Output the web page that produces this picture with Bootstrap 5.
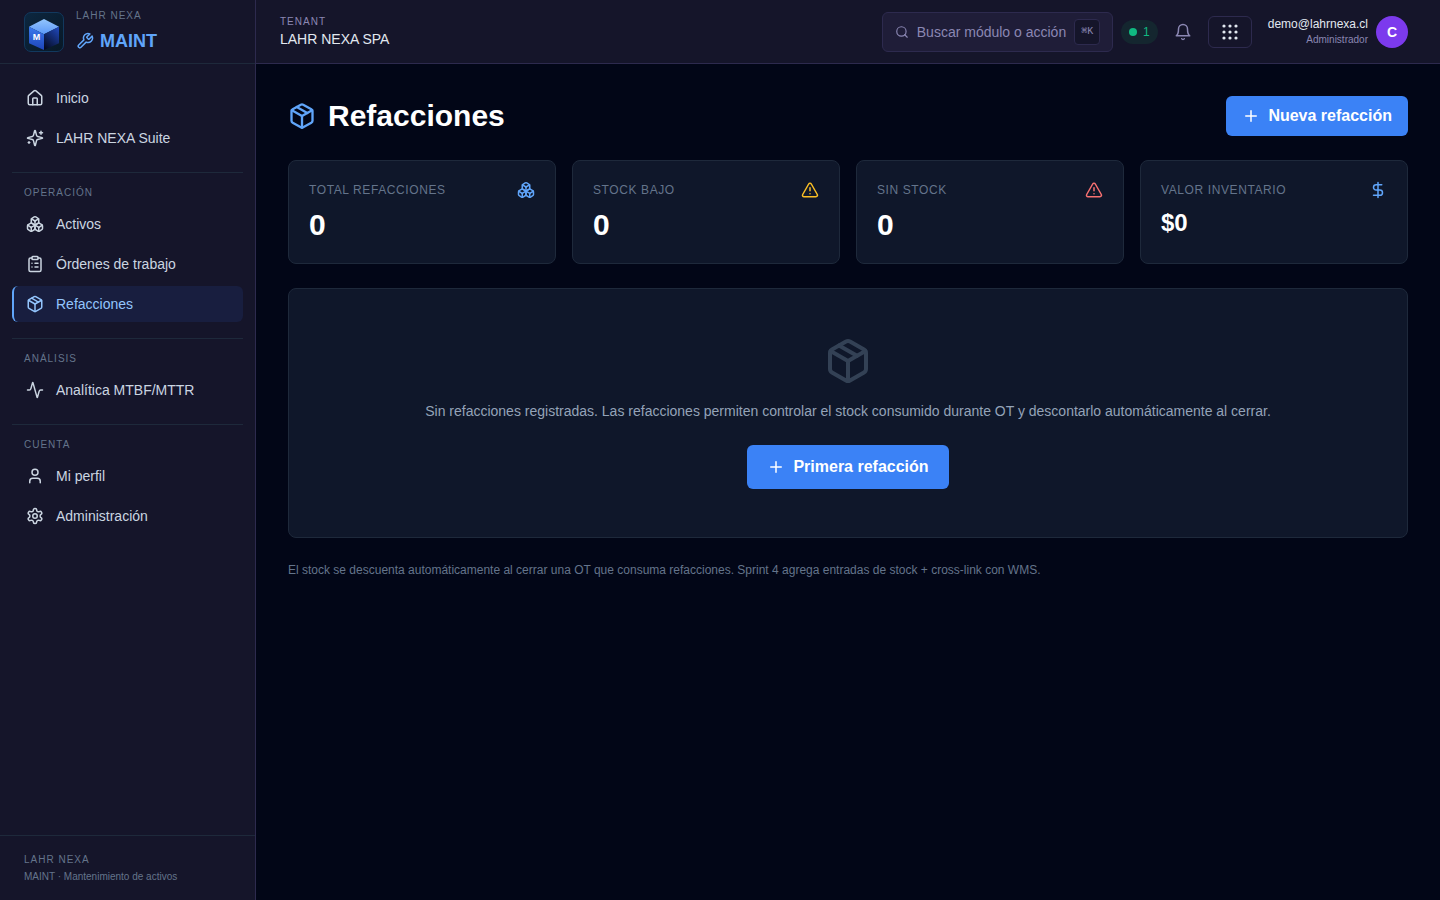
<!DOCTYPE html>
<html lang="es" data-bs-theme="dark">
<head>
<meta charset="utf-8">
<meta name="viewport" content="width=device-width, initial-scale=1">
<title>Refacciones · LAHR NEXA MAINT</title>
<link href="https://cdn.jsdelivr.net/npm/bootstrap@5.3.0/dist/css/bootstrap.min.css" rel="stylesheet">
<style>
  body { font-family: "Liberation Sans", Arial, sans-serif; font-size: 14px; line-height: 20px; background: #020617; color: #fff; }
  .ico { width: 18px; height: 18px; fill: none; stroke: currentColor; stroke-width: 2; stroke-linecap: round; stroke-linejoin: round; flex: none; display: block; }
  .sidebar { width: 256px; background: #15152a; border-right: 1px solid #2d2a4e; }
  .side-head { height: 64px; border-bottom: 1px solid #1e293b; padding: 0 24px; gap: 12px; }
  .eyebrow { font-size: 10px; line-height: 15px; letter-spacing: 1px; color: #64748b; text-transform: uppercase; }
  .product { font-size: 18px; line-height: 28px; font-weight: 700; color: #60a5fa; gap: 6px; margin-top: 4px; }
  .side-nav { padding: 16px 12px; gap: 4px; }
  .side-link { height: 36px; padding: 0 12px; gap: 12px; color: #cbd5e1; text-decoration: none; border-radius: 6px; border-left: 2px solid transparent; }
  .side-link.active { background: #181e3f; color: #93c5fd; border-left-color: #60a5fa; }
  .side-group { margin-top: 12px; border-top: 1px solid #1e293b; padding: 12px 12px 2px; }
  .side-foot { border-top: 1px solid #1e293b; padding: 16px 24px; }
  .foot-note { font-size: 10px; line-height: 15px; margin-top: 2px; color: #64748b; }
  .topbar { height: 64px; background: #15152a; border-bottom: 1px solid #2d2a4e; padding: 0 32px 0 24px; }
  .tenant { color: #e2e8f0; }
  .muted { color: #8b87b3; }
  .search { height: 40px; width: 231px; padding: 0 12px; border: 1px solid #2d2a4e; border-radius: 6px; background: #1f1d38; gap: 8px; }
  .search .ico { width: 14px; height: 14px; }
  .keycap { width: 26px; height: 26px; border: 1px solid #2d2a4e; border-radius: 4px; background: #15152a; font: 10px/15px "Liberation Mono", monospace; }
  .online { width: 37px; height: 24px; border-radius: 12px; background: #14262f; color: #10b981; font-size: 12px; gap: 6px; }
  .online i { width: 8px; height: 8px; border-radius: 50%; background: #10b981; }
  .apps { width: 44px; height: 32px; border: 1px solid #2d2a4e; border-radius: 6px; background: none; color: #e2e8f0; }
  .user-mail { font-size: 12px; line-height: 16px; }
  .user-role { font-size: 10px; line-height: 15px; }
  .avatar { width: 32px; height: 32px; border-radius: 50%; background: #7c3aed; font-weight: 700; }
  .page { padding: 32px; }
  .page h1 { font-size: 30px; line-height: 36px; font-weight: 700; gap: 12px; }
  .page h1 .ico { width: 28px; height: 28px; }
  .tone-blue { color: #60a5fa; }
  .tone-amber { color: #fbbf24; }
  .tone-red { color: #f87171; }
  .btn-blue { --bs-btn-bg: #3b82f6; --bs-btn-color: #fff; --bs-btn-hover-bg: #2563eb; --bs-btn-hover-color: #fff; --bs-btn-border-width: 0; --bs-btn-border-radius: 6px; --bs-btn-font-weight: 700; --bs-btn-font-size: 16px; --bs-btn-line-height: 24px; --bs-btn-padding-y: 8px; --bs-btn-padding-x: 16px; }
  .btn-blue.roomy { --bs-btn-padding-y: 10px; --bs-btn-padding-x: 20px; }
  .stats { display: grid; grid-template-columns: repeat(4, 1fr); gap: 16px; margin: 24px 0; }
  .panel { background: #0f172a; border: 1px solid #1e293b; border-radius: 8px; }
  .stat { height: 104px; padding: 20px; }
  .stat-label { font-size: 12px; line-height: 16px; letter-spacing: .6px; color: #64748b; }
  .stat-value { font-size: 30px; line-height: 36px; font-weight: 700; margin-top: 8px; }
  .stat-value.compact { font-size: 24px; line-height: 32px; }
  .empty { padding: 48px; color: #94a3b8; }
  .empty .box { width: 48px; height: 48px; color: #334155; }
  .note { font-size: 12px; line-height: 16px; color: #64748b; margin: 24px 0 0; }
</style>
</head>
<body>
<svg class="d-none" aria-hidden="true">
  <symbol id="home" viewBox="0 0 24 24"><path d="M15 21v-8a1 1 0 0 0-1-1h-4a1 1 0 0 0-1 1v8"/><path d="M3 10a2 2 0 0 1 .709-1.528l7-5.999a2 2 0 0 1 2.582 0l7 5.999A2 2 0 0 1 21 10v9a2 2 0 0 1-2 2H5a2 2 0 0 1-2-2z"/></symbol>
  <symbol id="sparkles" viewBox="0 0 24 24"><path d="M9.937 15.5A2 2 0 0 0 8.5 14.063l-6.135-1.582a.5.5 0 0 1 0-.962L8.5 9.936A2 2 0 0 0 9.937 8.5l1.582-6.135a.5.5 0 0 1 .963 0L14.063 8.5A2 2 0 0 0 15.5 9.937l6.135 1.581a.5.5 0 0 1 0 .964L15.5 14.063a2 2 0 0 0-1.437 1.437l-1.582 6.135a.5.5 0 0 1-.963 0z"/><path d="M20 3v4M22 5h-4M4 17v2M5 18H3"/></symbol>
  <symbol id="boxes" viewBox="0 0 24 24"><path d="M2.97 12.92A2 2 0 0 0 2 14.63v3.24a2 2 0 0 0 .97 1.71l3 1.8a2 2 0 0 0 2.06 0L12 19v-5.5l-5-3-4.03 2.42Z"/><path d="m7 16.5-4.74-2.85"/><path d="m7 16.5 5-3"/><path d="M7 16.5v5.17"/><path d="M12 13.5V19l3.97 2.38a2 2 0 0 0 2.06 0l3-1.8a2 2 0 0 0 .97-1.71v-3.24a2 2 0 0 0-.97-1.71L17 10.5l-5 3Z"/><path d="m17 16.5-5-3"/><path d="m17 16.5 4.74-2.85"/><path d="M17 16.5v5.17"/><path d="M7.97 4.42A2 2 0 0 0 7 6.13v4.37l5 3 5-3V6.13a2 2 0 0 0-.97-1.71l-3-1.8a2 2 0 0 0-2.06 0l-3 1.8Z"/><path d="M12 8 7.26 5.15"/><path d="m12 8 4.74-2.85"/><path d="M12 13.5V8"/></symbol>
  <symbol id="clipboard" viewBox="0 0 24 24"><rect width="8" height="4" x="8" y="2" rx="1"/><path d="M16 4h2a2 2 0 0 1 2 2v14a2 2 0 0 1-2 2H6a2 2 0 0 1-2-2V6a2 2 0 0 1 2-2h2M12 11h4M12 16h4M8 11h.01M8 16h.01"/></symbol>
  <symbol id="package" viewBox="0 0 24 24"><path d="M11 21.73a2 2 0 0 0 2 0l7-4A2 2 0 0 0 21 16V8a2 2 0 0 0-1-1.73l-7-4a2 2 0 0 0-2 0l-7 4A2 2 0 0 0 3 8v8a2 2 0 0 0 1 1.73z"/><path d="M12 22V12"/><path d="M3.29 7 12 12l8.71-5"/><path d="m7.5 4.27 9 5.15"/></symbol>
  <symbol id="activity" viewBox="0 0 24 24"><path d="M22 12h-2.48a2 2 0 0 0-1.93 1.46l-2.35 8.36a.25.25 0 0 1-.48 0L9.24 2.18a.25.25 0 0 0-.48 0l-2.35 8.36A2 2 0 0 1 4.49 12H2"/></symbol>
  <symbol id="user" viewBox="0 0 24 24"><path d="M19 21v-2a4 4 0 0 0-4-4H9a4 4 0 0 0-4 4v2"/><circle cx="12" cy="7" r="4"/></symbol>
  <symbol id="gear" viewBox="0 0 24 24"><path d="M12.22 2h-.44a2 2 0 0 0-2 2v.18a2 2 0 0 1-1 1.73l-.43.25a2 2 0 0 1-2 0l-.15-.08a2 2 0 0 0-2.73.73l-.22.38a2 2 0 0 0 .73 2.73l.15.1a2 2 0 0 1 1 1.72v.51a2 2 0 0 1-1 1.74l-.15.09a2 2 0 0 0-.73 2.73l.22.38a2 2 0 0 0 2.73.73l.15-.08a2 2 0 0 1 2 0l.43.25a2 2 0 0 1 1 1.73V20a2 2 0 0 0 2 2h.44a2 2 0 0 0 2-2v-.18a2 2 0 0 1 1-1.73l.43-.25a2 2 0 0 1 2 0l.15.08a2 2 0 0 0 2.73-.73l.22-.39a2 2 0 0 0-.73-2.73l-.15-.08a2 2 0 0 1-1-1.74v-.5a2 2 0 0 1 1-1.74l.15-.09a2 2 0 0 0 .73-2.73l-.22-.38a2 2 0 0 0-2.73-.73l-.15.08a2 2 0 0 1-2 0l-.43-.25a2 2 0 0 1-1-1.73V4a2 2 0 0 0-2-2z"/><circle cx="12" cy="12" r="3"/></symbol>
  <symbol id="wrench" viewBox="0 0 24 24"><path d="M14.7 6.3a1 1 0 0 0 0 1.4l1.6 1.6a1 1 0 0 0 1.4 0l3.77-3.77a6 6 0 0 1-7.94 7.94l-6.91 6.91a2.12 2.12 0 0 1-3-3l6.91-6.91a6 6 0 0 1 7.94-7.94l-3.76 3.76z"/></symbol>
  <symbol id="search" viewBox="0 0 24 24"><circle cx="11" cy="11" r="8"/><path d="m21 21-4.3-4.3"/></symbol>
  <symbol id="bell" viewBox="0 0 24 24"><path d="M6 8a6 6 0 0 1 12 0c0 7 3 9 3 9H3s3-2 3-9"/><path d="M10.3 21a1.94 1.94 0 0 0 3.4 0"/></symbol>
  <symbol id="plus" viewBox="0 0 24 24"><path d="M5 12h14M12 5v14"/></symbol>
  <symbol id="alert" viewBox="0 0 24 24"><path d="m21.73 18-8-14a2 2 0 0 0-3.48 0l-8 14A2 2 0 0 0 4 21h16a2 2 0 0 0 1.73-3M12 9v4M12 17h.01"/></symbol>
  <symbol id="dollar" viewBox="0 0 24 24"><path d="M12 2v20M17 5H9.5a3.5 3.5 0 0 0 0 7h5a3.5 3.5 0 0 1 0 7H6"/></symbol>
</svg>

<div class="d-flex vh-100 overflow-hidden">
  <aside class="sidebar d-flex flex-column flex-shrink-0">
    <div class="side-head d-flex align-items-center">
      <svg width="40" height="40" viewBox="0 0 40 40" role="img" aria-label="LAHR NEXA MAINT">
        <defs>
          <linearGradient id="tile" x1="0" y1="0" x2="1" y2="1"><stop offset="0" stop-color="#0c2740"/><stop offset="1" stop-color="#081826"/></linearGradient>
          <linearGradient id="faceTop" x1="0" y1="0" x2="0" y2="1"><stop offset="0" stop-color="#93c5fd"/><stop offset="1" stop-color="#5b98f8"/></linearGradient>
          <linearGradient id="faceLeft" x1="0" y1="0" x2="0" y2="1"><stop offset="0" stop-color="#3b7bee"/><stop offset="1" stop-color="#1d43b8"/></linearGradient>
          <linearGradient id="faceRight" x1=".8" y1="0" x2=".2" y2="1"><stop offset="0" stop-color="#1e45b4"/><stop offset="1" stop-color="#050a20"/></linearGradient>
        </defs>
        <rect x=".5" y=".5" width="39" height="39" rx="6.5" fill="url(#tile)" stroke="#12395e"/>
        <path d="M20 7l15 7.700-15 7.500-15-7.500z" fill="url(#faceTop)"/>
        <path d="M5 14.700l15 7.500V38L5 31.300z" fill="url(#faceLeft)"/>
        <path d="M35 14.700l-15 7.500V38l15-6.700z" fill="url(#faceRight)"/>
        <text x="12.400" y="28.300" text-anchor="middle" font-size="9" font-weight="700" fill="#fff" font-family="Liberation Sans, sans-serif">M</text>
      </svg>
      <div>
        <div class="eyebrow">LAHR NEXA</div>
        <div class="product d-flex align-items-center"><svg class="ico"><use href="#wrench"/></svg>MAINT</div>
      </div>
    </div>
    <nav class="side-nav d-flex flex-column flex-grow-1">
      <a class="side-link d-flex align-items-center" href="#"><svg class="ico"><use href="#home"/></svg>Inicio</a>
      <a class="side-link d-flex align-items-center" href="#"><svg class="ico"><use href="#sparkles"/></svg>LAHR NEXA Suite</a>
      <div class="side-group eyebrow">Operación</div>
      <a class="side-link d-flex align-items-center" href="#"><svg class="ico"><use href="#boxes"/></svg>Activos</a>
      <a class="side-link d-flex align-items-center" href="#"><svg class="ico"><use href="#clipboard"/></svg>Órdenes de trabajo</a>
      <a class="side-link active d-flex align-items-center" href="#"><svg class="ico"><use href="#package"/></svg>Refacciones</a>
      <div class="side-group eyebrow">Análisis</div>
      <a class="side-link d-flex align-items-center" href="#"><svg class="ico"><use href="#activity"/></svg>Analítica MTBF/MTTR</a>
      <div class="side-group eyebrow">Cuenta</div>
      <a class="side-link d-flex align-items-center" href="#"><svg class="ico"><use href="#user"/></svg>Mi perfil</a>
      <a class="side-link d-flex align-items-center" href="#"><svg class="ico"><use href="#gear"/></svg>Administración</a>
    </nav>
    <div class="side-foot">
      <div class="eyebrow">LAHR NEXA</div>
      <div class="foot-note">MAINT · Mantenimiento de activos</div>
    </div>
  </aside>

  <div class="flex-grow-1 d-flex flex-column">
    <header class="topbar d-flex align-items-center justify-content-between">
      <div>
        <div class="eyebrow muted">Tenant</div>
        <div class="tenant">LAHR NEXA SPA</div>
      </div>
      <div class="d-flex align-items-center">
        <div class="search muted d-flex align-items-center me-2">
          <svg class="ico"><use href="#search"/></svg>
          <span class="text-nowrap">Buscar módulo o acción</span>
          <span class="keycap d-flex align-items-center justify-content-center flex-shrink-0">⌘K</span>
        </div>
        <div class="online d-flex align-items-center justify-content-center me-3"><i></i>1</div>
        <svg class="ico muted me-3"><use href="#bell"/></svg>
        <button class="apps d-flex align-items-center justify-content-center p-0 me-3" aria-label="Aplicaciones">
          <svg width="18" height="18" viewBox="0 0 18 18" fill="currentColor"><circle cx="3" cy="3" r="1.600"/><circle cx="9" cy="3" r="1.600"/><circle cx="15" cy="3" r="1.600"/><circle cx="3" cy="9" r="1.600"/><circle cx="9" cy="9" r="1.600"/><circle cx="15" cy="9" r="1.600"/><circle cx="3" cy="15" r="1.600"/><circle cx="9" cy="15" r="1.600"/><circle cx="15" cy="15" r="1.600"/></svg>
        </button>
        <div class="text-end me-2">
          <div class="tenant user-mail">demo@lahrnexa.cl</div>
          <div class="muted user-role">Administrador</div>
        </div>
        <div class="avatar d-flex align-items-center justify-content-center">C</div>
      </div>
    </header>

    <main class="page flex-grow-1">
      <div class="d-flex align-items-center justify-content-between">
        <h1 class="d-flex align-items-center mb-0"><svg class="ico tone-blue"><use href="#package"/></svg>Refacciones</h1>
        <button class="btn btn-blue d-flex align-items-center gap-2"><svg class="ico"><use href="#plus"/></svg>Nueva refacción</button>
      </div>
      <section class="stats">
        <div class="panel stat">
          <div class="d-flex align-items-center justify-content-between"><span class="stat-label">TOTAL REFACCIONES</span><svg class="ico tone-blue"><use href="#boxes"/></svg></div>
          <div class="stat-value">0</div>
        </div>
        <div class="panel stat">
          <div class="d-flex align-items-center justify-content-between"><span class="stat-label">STOCK BAJO</span><svg class="ico tone-amber"><use href="#alert"/></svg></div>
          <div class="stat-value">0</div>
        </div>
        <div class="panel stat">
          <div class="d-flex align-items-center justify-content-between"><span class="stat-label">SIN STOCK</span><svg class="ico tone-red"><use href="#alert"/></svg></div>
          <div class="stat-value">0</div>
        </div>
        <div class="panel stat">
          <div class="d-flex align-items-center justify-content-between"><span class="stat-label">VALOR INVENTARIO</span><svg class="ico tone-blue"><use href="#dollar"/></svg></div>
          <div class="stat-value compact">$0</div>
        </div>
      </section>
      <section class="panel empty d-flex flex-column align-items-center">
        <svg class="ico box"><use href="#package"/></svg>
        <p class="mt-3 mb-4">Sin refacciones registradas. Las refacciones permiten controlar el stock consumido durante OT y descontarlo automáticamente al cerrar.</p>
        <button class="btn btn-blue roomy d-flex align-items-center gap-2"><svg class="ico"><use href="#plus"/></svg>Primera refacción</button>
      </section>
      <p class="note">El stock se descuenta automáticamente al cerrar una OT que consuma refacciones. Sprint 4 agrega entradas de stock + cross-link con WMS.</p>
    </main>
  </div>
</div>
<script src="https://cdn.jsdelivr.net/npm/bootstrap@5.3.0/dist/js/bootstrap.bundle.min.js"></script>
</body>
</html>
